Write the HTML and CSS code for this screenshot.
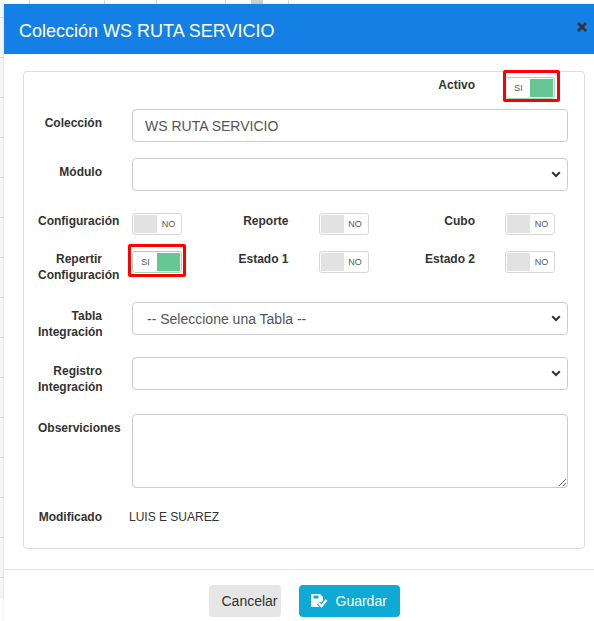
FILE: index.html
```html
<!DOCTYPE html>
<html lang="es">
<head>
<meta charset="utf-8">
<title>Colección WS RUTA SERVICIO</title>
<link rel="stylesheet" href="styles.css">
</head>
<body>
<div class="modal">
  <div class="modal-header">
    <h4 class="modal-title">Colección WS RUTA SERVICIO</h4>
    <button class="close" type="button" aria-label="Cerrar">
      <svg width="10" height="10" viewBox="0 0 10 10"><path d="M1 1 L9 9 M9 1 L1 9" stroke="#333" stroke-width="2.8" fill="none"/></svg>
    </button>
  </div>
  <div class="modal-body">
    <div class="panel">
      <div class="grid3 row-activo">
        <div class="field col-third">
          <label class="lbl">Activo</label>
          <div class="hl hl-activo">
            <div class="toggle on"><span class="t-txt">SI</span><span class="t-fill"></span></div>
          </div>
        </div>
      </div>

      <div class="row row-coleccion">
        <label class="lbl pad">Colección</label>
        <div class="input">WS RUTA SERVICIO</div>
      </div>

      <div class="row row-modulo">
        <label class="lbl pad">Módulo</label>
        <div class="select"><span class="sel-txt"></span><svg class="chev" width="10" height="7" viewBox="0 0 10 7"><polyline points="1.2,1.3 5,5 8.8,1.3" fill="none" stroke="#333" stroke-width="2.1"/></svg></div>
      </div>

      <div class="grid3 row-config">
        <div class="field">
          <label class="lbl">Configuración</label>
          <div class="toggle"><span class="t-fill"></span><span class="t-txt">NO</span></div>
        </div>
        <div class="field">
          <label class="lbl">Reporte</label>
          <div class="toggle"><span class="t-fill"></span><span class="t-txt">NO</span></div>
        </div>
        <div class="field">
          <label class="lbl">Cubo</label>
          <div class="toggle"><span class="t-fill"></span><span class="t-txt">NO</span></div>
        </div>
      </div>

      <div class="grid3 row-repertir">
        <div class="field">
          <label class="lbl">Repertir Configuración</label>
          <div class="hl hl-rep">
            <div class="toggle on"><span class="t-txt">SI</span><span class="t-fill"></span></div>
          </div>
        </div>
        <div class="field">
          <label class="lbl">Estado 1</label>
          <div class="toggle"><span class="t-fill"></span><span class="t-txt">NO</span></div>
        </div>
        <div class="field">
          <label class="lbl">Estado 2</label>
          <div class="toggle"><span class="t-fill"></span><span class="t-txt">NO</span></div>
        </div>
      </div>

      <div class="row row-tabla">
        <label class="lbl pad">Tabla Integración</label>
        <div class="select"><span class="sel-txt">-- Seleccione una Tabla --</span><svg class="chev" width="10" height="7" viewBox="0 0 10 7"><polyline points="1.2,1.3 5,5 8.8,1.3" fill="none" stroke="#333" stroke-width="2.1"/></svg></div>
      </div>

      <div class="row row-registro">
        <label class="lbl pad">Registro Integración</label>
        <div class="select"><span class="sel-txt"></span><svg class="chev" width="10" height="7" viewBox="0 0 10 7"><polyline points="1.2,1.3 5,5 8.8,1.3" fill="none" stroke="#333" stroke-width="2.1"/></svg></div>
      </div>

      <div class="row row-obs">
        <label class="lbl pad">Observiciones</label>
        <textarea class="textarea"></textarea>
      </div>

      <div class="row row-mod">
        <label class="lbl">Modificado</label>
        <span class="static">LUIS E SUAREZ</span>
      </div>
    </div>
  </div>
  <div class="modal-footer">
    <button class="btn btn-cancel" type="button">Cancelar</button>
    <button class="btn btn-save" type="button">
      <svg class="save-ico" width="17" height="14" viewBox="0 0 17 14">
        <path d="M0 0.5 Q0 0 0.5 0 H9 L12 3 V12.5 Q12 13 11.5 13 H0.5 Q0 13 0 12.5 Z" fill="#fff"/>
        <rect x="2.5" y="1.5" width="5" height="3" fill="#0eaad6"/>
        <polyline points="7.5,9 10.5,12 15.5,6" fill="none" stroke="#0eaad6" stroke-width="4.5"/>
        <polyline points="7.5,9 10.5,12 15.5,6" fill="none" stroke="#fff" stroke-width="2.2"/>
      </svg>
      <span>Guardar</span>
    </button>
  </div>
</div>
</body>
</html>
```

FILE: styles.css
```css
html, body {
  margin: 0;
  height: 100%;
  overflow: hidden;
}

body {
  font-family: "Liberation Sans", Arial, sans-serif;
  color: #333;
  background:
    linear-gradient(#dcdcdc, #dcdcdc) 29px 0 / 1px 4px no-repeat,
    linear-gradient(#dcdcdc, #dcdcdc) 104px 0 / 1px 4px no-repeat,
    linear-gradient(#dcdcdc, #dcdcdc) 156px 0 / 1px 4px no-repeat,
    linear-gradient(#dcdcdc, #dcdcdc) 225px 0 / 1px 4px no-repeat,
    linear-gradient(#dcdcdc, #dcdcdc) 288px 0 / 1px 4px no-repeat,
    linear-gradient(#d0d0d0, #d0d0d0) 251px 0 / 12px 4px no-repeat,
    repeating-linear-gradient(to bottom, #f6f6f6 0 39px, #e0e0e0 39px 40px) 0 -22px / 4px 100% no-repeat,
    #fff;
}

.modal {
  width: 600px;
  margin: 4px 0 0 4px;
  background: #fff;
  box-shadow: 0 0 3px rgba(0, 0, 0, 0.12);
}

.modal-header {
  height: 50px;
  box-sizing: border-box;
  background: #1480e6;
  display: flex;
  align-items: flex-start;
  justify-content: space-between;
  padding: 0 17px 0 15px;
}

.modal-title {
  margin: 18px 0 0;
  font-size: 18px;
  line-height: 18px;
  font-weight: normal;
  color: #fff;
}

.close {
  margin-top: 18px;
  width: 10px;
  height: 10px;
  padding: 0;
  border: 0;
  background: none;
  display: block;
}

.close svg {
  display: block;
}

.modal-body {
  padding: 17px 19px 20px;
}

.panel {
  border: 1px solid #ddd;
  border-radius: 4px;
  padding: 5px 16px 23px 14px;
}

.row {
  display: flex;
  align-items: flex-start;
}

.grid3 {
  display: grid;
  grid-template-columns: repeat(3, 1fr);
  column-gap: 29.5px;
}

.field {
  display: flex;
  align-items: flex-start;
  min-width: 0;
}

.col-third {
  grid-column: 3;
}

.lbl {
  width: 64px;
  flex-shrink: 0;
  margin-right: 30px;
  text-align: right;
  font-size: 12px;
  line-height: 16px;
  font-weight: bold;
  color: #333;
}

.lbl.pad {
  padding-top: 6px;
}

.row-coleccion { margin-top: 10px; }
.row-modulo { margin-top: 16px; }
.row-config { margin-top: 22px; }
.row-repertir { margin-top: 16px; }
.row-tabla { margin-top: 19px; }
.row-registro { margin-top: 17px; }
.row-obs { margin-top: 19px; }
.row-mod { margin-top: 21px; }

.input,
.select {
  flex: 1;
  height: 33px;
  box-sizing: border-box;
  border: 1px solid #ccc;
  border-radius: 4px;
  font-size: 14px;
  color: #555;
  display: flex;
  align-items: center;
}

.input {
  padding: 0 12px;
}

.select {
  padding: 0 6px 0 14px;
}

.sel-txt {
  flex: 1;
}

.chev {
  display: block;
}

.textarea {
  flex: 1;
  display: block;
  height: 74px;
  box-sizing: border-box;
  border: 1px solid #ccc;
  border-radius: 4px;
  margin: 0;
  padding: 6px 12px;
  font-family: inherit;
  font-size: 14px;
  color: #555;
  resize: both;
}

.static {
  margin-left: -3px;
  font-size: 12px;
  line-height: 16px;
  color: #333;
}

.toggle {
  display: flex;
  width: 50px;
  height: 22px;
  box-sizing: border-box;
  border: 1px solid #d8d8d8;
  border-radius: 3px;
  padding: 1px;
  background: #fff;
  flex-shrink: 0;
}

.toggle > span {
  flex: 1;
}

.t-fill {
  background: #e2e2e2;
}

.toggle.on {
  border-color: #9fd8b6;
}

.toggle.on .t-fill {
  background: #66c795;
}

.t-txt {
  display: flex;
  align-items: center;
  justify-content: center;
  font-size: 9px;
  color: #555;
}

.hl {
  position: relative;
}

.hl::after {
  content: "";
  position: absolute;
  top: -7px;
  bottom: -4px;
  left: -4px;
  right: -4px;
  border: 3px solid #f00;
  border-radius: 2px;
}

.hl-activo::after {
  left: -2px;
  right: -5px;
  bottom: -3px;
}

.modal-footer {
  border-top: 1px solid #e5e5e5;
  padding: 15px 0 8px;
  display: flex;
  justify-content: center;
  gap: 18px;
}

.btn {
  height: 32px;
  border: 0;
  border-radius: 4px;
  font-family: inherit;
  font-size: 14px;
  box-sizing: border-box;
  margin: 0;
}

.btn-cancel {
  width: 72px;
  padding: 0 0 0 13px;
  text-align: left;
  background: #e6e6e6;
  color: #333;
}

.btn-save {
  width: 101px;
  padding: 0 0 0 12px;
  display: flex;
  align-items: center;
  gap: 8px;
  background: #0eaad6;
  color: #fff;
}

.save-ico {
  display: block;
}
```
